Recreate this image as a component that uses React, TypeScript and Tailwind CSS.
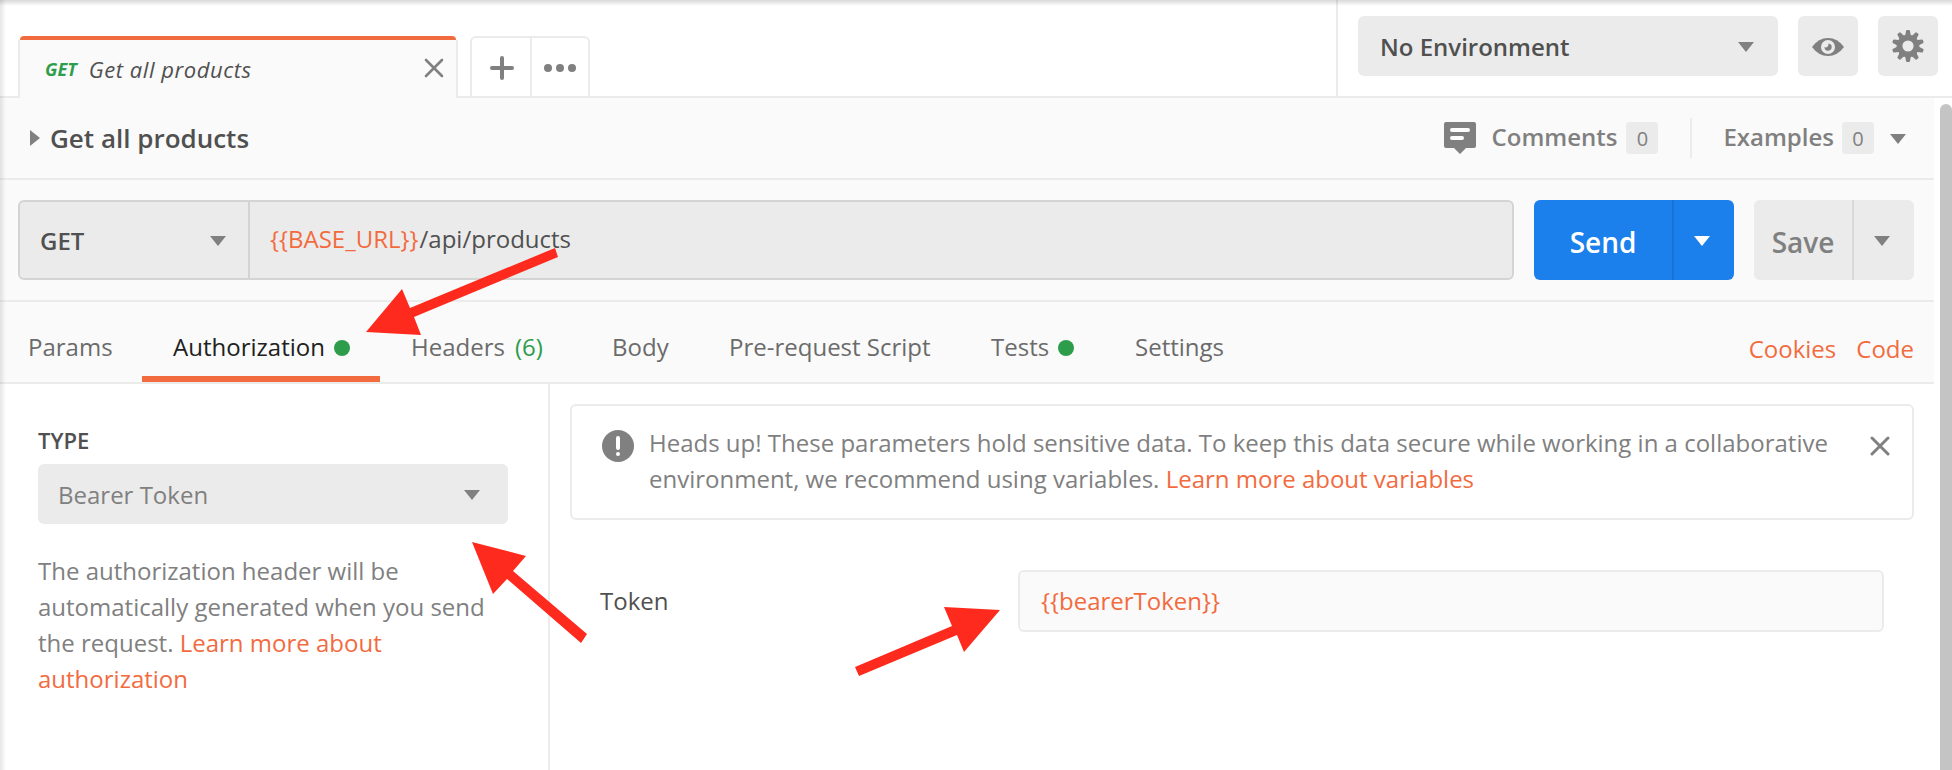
import React from "react";

const Caret = ({ className = "" }: { className?: string }) => (
  <svg className={"mt-0.5 shrink-0 " + className} width="16" height="10" viewBox="0 0 16 10">
    <path d="M0 0H16L8 10Z" fill="currentColor" />
  </svg>
);

const Close = ({ s, w }: { s: number; w: number }) => (
  <svg width={s} height={s} viewBox="0 0 20 20" fill="none" stroke="currentColor" strokeWidth={w} strokeLinecap="round">
    <path d="M2 2L18 18M18 2L2 18" />
  </svg>
);

const Dot = () => <span className="mt-0.5 size-4 rounded-full bg-[#2d9d4c]" />;

const teeth = [0, 36, 72, 108, 144, 180, 216, 252, 288, 324];

const Gear = () => (
  <svg width="32" height="32" viewBox="-16 -16 32 32" fill="#808080">
    {teeth.map((a) => (
      <path key={a} d="M-3.400 -9.500Q-2.200 -12 -2 -15Q-1.900 -16 -1 -16H1Q1.900 -16 2 -15Q2.200 -12 3.400 -9.500Z" transform={`rotate(${a})`} />
    ))}
    <path fillRule="evenodd" d="M0 -11.300A11.300 11.300 0 1 1 0 11.300A11.300 11.300 0 1 1 0 -11.300ZM0 -5.600A5.600 5.600 0 1 0 0 5.600A5.600 5.600 0 1 0 0 -5.600Z" />
  </svg>
);

const Eye = () => (
  <svg className="mt-0.5" width="32" height="20" viewBox="0 0 32 20">
    <path d="M0 10Q6.500 1 16 1Q25.500 1 32 10Q25.500 19 16 19Q6.500 19 0 10Z" fill="#808080" />
    <circle cx="16" cy="10" r="7" fill="#ebebeb" />
    <path d="M16.500 6.500A3.600 3.600 0 1 1 12.500 10Q14 11 15.500 9.800Q16.800 8.500 16.500 6.500Z" fill="#808080" />
  </svg>
);

const Arrow = ({ className, points, w, h }: { className: string; points: string; w: number; h: number }) => (
  <svg className={"absolute " + className} width={w} height={h} viewBox={`0 0 ${w} ${h}`}>
    <polygon points={points} fill="#fd2a1d" />
  </svg>
);

const Count = () => (
  <span className="flex h-8 w-8 items-center justify-center rounded bg-[#ebebeb] pt-0.5 text-[20px]">0</span>
);

export default function App() {
  return (
    <div className="relative flex h-[770px] w-[1952px] flex-col overflow-hidden bg-white font-['Open_Sans',sans-serif] text-[24px] leading-9 text-[#808080]">
      <header className="flex h-[98px] shrink-0">
        <div className="w-[18px] border-b-2 border-[#ebebeb]" />
        <div className="flex h-[98px] w-[440px] flex-col pt-9">
          <div className="mx-0.5 h-1 shrink-0 rounded-t bg-[#f26b3f]" />
          <div className="flex grow items-center border-x-2 border-[#ebebeb] bg-[#fafafa] pr-3 pl-[25px] italic">
            <span className="text-[18px] font-bold text-[#2d9d4c]">GET</span>
            <span className="ml-3 text-[22px] tracking-[0.55px] text-[#505050]">Get all products</span>
            <span className="mb-0.5 ml-auto"><Close s={20} w={2.6} /></span>
          </div>
        </div>
        <div className="w-3 border-b-2 border-[#ebebeb]" />
        <div className="mt-9 flex w-[120px] rounded-t-md border-2 border-[#ebebeb]">
          <div className="flex w-[60px] items-center justify-center border-r-2 border-[#ebebeb] pt-0.5 pl-0.5">
            <svg width="24" height="24" viewBox="0 0 24 24" stroke="#808080" strokeWidth="4" strokeLinecap="round">
              <path d="M12 2V22M2 12H22" />
            </svg>
          </div>
          <div className="flex grow items-center justify-center gap-1 pt-0.5">
            <i className="size-2 rounded-full bg-[#808080]" />
            <i className="size-2 rounded-full bg-[#808080]" />
            <i className="size-2 rounded-full bg-[#808080]" />
          </div>
        </div>
        <div className="grow border-b-2 border-[#ebebeb]" />
        <div className="flex w-[616px] gap-5 border-b-2 border-l-2 border-[#ebebeb] pt-4 pl-5">
          <div className="flex h-[60px] w-[420px] items-center justify-between rounded-md bg-[#ebebeb] pr-6 pl-[22px] font-semibold text-[#505050]">
            <span className="pt-0.5">No Environment</span>
            <Caret className="text-[#808080]" />
          </div>
          <div className="flex h-[60px] w-[60px] items-center justify-center rounded-md bg-[#ebebeb]"><Eye /></div>
          <div className="flex h-[60px] w-[60px] items-center justify-center rounded-md bg-[#ebebeb]"><Gear /></div>
        </div>
      </header>

      <div className="flex grow">
        <main className="flex w-[1934px] flex-col">
          <section className="flex h-[82px] shrink-0 items-center border-b-2 border-[#ebebeb] bg-[#fafafa] pr-7 pl-[30px]">
            <svg width="10" height="16" viewBox="0 0 10 16"><path d="M0 0V16L10 8Z" fill="#808080" /></svg>
            <span className="ml-2.5 text-[26px] font-semibold text-[#505050]">Get all products</span>
            <svg className="ml-auto" width="32" height="32" viewBox="0 0 32 32">
              <path d="M2 0H30Q32 0 32 2V24Q32 26 30 26H22L16 32L10 26H2Q0 26 0 24V2Q0 0 2 0Z" fill="#808080" />
              <path d="M8 8H24M8 16H18" stroke="#fff" strokeWidth="4" strokeLinecap="round" />
            </svg>
            <span className="-mt-0.5 ml-4 font-semibold">Comments</span>
            <span className="ml-[9px]"><Count /></span>
            <span className="ml-8 h-10 w-0.5 bg-[#ebebeb]" />
            <span className="-mt-0.5 ml-[31px] font-semibold">Examples</span>
            <span className="ml-2"><Count /></span>
            <Caret className="ml-4" />
          </section>

          <section className="flex h-[122px] shrink-0 gap-5 border-b-2 border-[#ebebeb] bg-[#fafafa] pt-5 pl-[18px]">
            <div className="flex h-20 w-[1496px] rounded-md border-2 border-[#d4d4d4] bg-[#ebebeb]">
              <div className="flex w-[230px] items-center justify-between border-r-2 border-[#d4d4d4] pr-[22px] pl-5">
                <span className="pt-0.5 font-semibold text-[#505050]">GET</span>
                <Caret />
              </div>
              <div className="flex items-center pb-0.5 pl-5 text-[#505050]">
                <span className="text-[#f26b3f]">{"{{BASE_URL}}"}</span><span className="pl-px">/api/products</span>
              </div>
            </div>
            <div className="flex h-20 w-[200px] overflow-hidden rounded-md bg-[#1b7fec] text-white">
              <div className="flex w-[140px] items-center justify-center border-r-2 border-[#1673d9] pt-1 text-[28px] font-semibold">Send</div>
              <div className="flex grow items-center justify-center pr-1"><Caret /></div>
            </div>
            <div className="flex h-20 w-40 overflow-hidden rounded-md bg-[#ebebeb]">
              <div className="flex w-[100px] items-center justify-center border-r-2 border-[#d9d9d9] pt-1 text-[28px] font-semibold">Save</div>
              <div className="flex grow items-center justify-center pr-1"><Caret /></div>
            </div>
          </section>

          <nav className="flex h-[82px] shrink-0 border-b-2 border-[#ebebeb] bg-[#fafafa] text-[#6b6b6b]">
            <div className="flex w-[142px] items-center pt-2.5 pl-7">Params</div>
            <div className="flex w-[238px] items-center justify-center gap-[9px] border-b-6 border-[#f26b3f] pt-4 pl-px text-[#212121]">
              Authorization<Dot />
            </div>
            <div className="flex w-[201px] items-center gap-2.5 pt-2.5 pl-[31px]">
              Headers <span className="text-[#2d9d4c]">(6)</span>
            </div>
            <div className="flex w-[118px] items-center pt-2.5 pl-[31px]">Body</div>
            <div className="flex w-[260px] items-center pt-2.5 pl-[30px]">Pre-request Script</div>
            <div className="flex w-[146px] items-center gap-[9px] pt-2.5 pl-8">Tests<Dot /></div>
            <div className="flex items-center pt-2.5 pl-[30px]">Settings</div>
            <div className="ml-auto flex items-center gap-5 pt-3.5 pr-5 text-[#f26b3f]"><span>Cookies</span><span>Code</span></div>
          </nav>

          <section className="flex grow">
            <aside className="w-[550px] border-r-2 border-[#ebebeb] pt-[38px] pr-10 pl-[38px]">
              <div className="text-[22px] font-semibold text-[#505050]">TYPE</div>
              <div className="mt-1.5 flex h-[60px] items-center justify-between rounded-md bg-[#ebebeb] pr-7 pl-5">
                <span className="pt-0.5">Bearer Token</span>
                <Caret />
              </div>
              <p className="mt-[29px] w-[460px]">
                The authorization header will be automatically generated when you send the request.{" "}
                <span className="text-[#f26b3f]">Learn more about authorization</span>
              </p>
            </aside>
            <div className="w-[1384px] pt-5 pl-5">
              <div className="flex h-[116px] w-[1344px] rounded-md border-2 border-[#ebebeb] pt-[19px] pl-[30px]">
                <svg className="mt-[5px] shrink-0" width="32" height="32" viewBox="0 0 32 32">
                  <circle cx="16" cy="16" r="16" fill="#808080" />
                  <path d="M16 8V18M16 24V24.100" stroke="#fff" strokeWidth="4" strokeLinecap="round" />
                </svg>
                <p className="ml-[15px] w-[1200px]">
                  Heads up! These parameters hold sensitive data. To keep this data secure while working in a collaborative
                  environment, we recommend using variables. <span className="text-[#f26b3f]">Learn more about variables</span>
                </p>
                <span className="mt-[11px] ml-[21px]"><Close s={20} w={3} /></span>
              </div>
              <div className="mt-[50px] flex items-center pl-[30px]">
                <span className="w-[418px] text-[#505050]">Token</span>
                <div className="flex h-[62px] w-[866px] items-center rounded-md border-2 border-[#ebebeb] bg-[#fafafa] pl-[21px] text-[#f26b3f]">
                  {"{{bearerToken}}"}
                </div>
              </div>
            </div>
          </section>
        </main>
        <div className="flex w-[18px] pt-1.5 pl-1.5"><div className="w-3 rounded-t-full bg-[#c4c4c4]" /></div>
      </div>

      <div className="absolute inset-x-0 top-0 h-1.5 bg-linear-to-b from-black/15 to-transparent" />
      <div className="absolute inset-y-0 left-0 w-1.5 bg-linear-to-r from-black/10 to-transparent" />
      <Arrow className="top-[246px] left-[365px]" w={195} h={92} points="1,86 37,43 45,62 190,2 193,11 49,71 56,89" />
      <Arrow className="top-[541px] left-[471px]" w={118} h={104} points="1,1 55,15 42,30 116,93 110,102 36,38 22,53" />
      <Arrow className="top-[605px] left-[854px]" w={148} h={74} points="1,62 98,21 90,2 146,5 110,47 103,30 5,71" />
    </div>
  );
}
